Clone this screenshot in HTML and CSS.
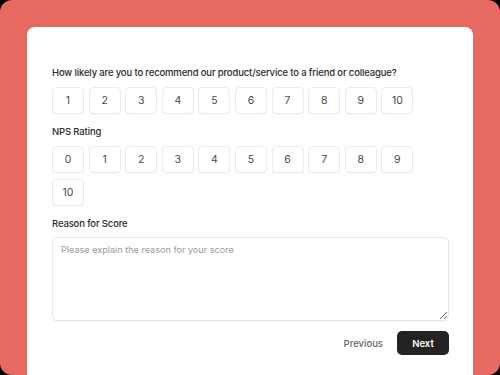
FILE: index.html
```html
<!DOCTYPE html>
<html>
<head>
<meta charset="utf-8">
<link rel="stylesheet" href="styles.css">
</head>
<body>
<div class="frame">
  <div class="card">
    <div class="field">
      <label class="label">How likely are you to recommend our product/service to a friend or colleague?</label>
      <div class="scale">
        <button class="opt">1</button><button class="opt">2</button><button class="opt">3</button><button class="opt">4</button><button class="opt">5</button><button class="opt">6</button><button class="opt">7</button><button class="opt">8</button><button class="opt">9</button><button class="opt">10</button>
      </div>
    </div>
    <div class="field">
      <label class="label">NPS Rating</label>
      <div class="scale">
        <button class="opt">0</button><button class="opt">1</button><button class="opt">2</button><button class="opt">3</button><button class="opt">4</button><button class="opt">5</button><button class="opt">6</button><button class="opt">7</button><button class="opt">8</button><button class="opt">9</button><button class="opt">10</button>
      </div>
    </div>
    <div class="field">
      <label class="label">Reason for Score</label>
      <textarea class="text" placeholder="Please explain the reason for your score"></textarea>
    </div>
    <div class="actions">
      <button class="prev">Previous</button>
      <button class="next">Next</button>
    </div>
  </div>
</div>
</body>
</html>
```
FILE: styles.css
```css
html {
  background: #000;
}
body {
  margin: 0;
  height: 375px;
  overflow: hidden;
  font-family: Inter, "Noto Sans", sans-serif;
}
.frame {
  height: 375px;
  box-sizing: border-box;
  background: #e66a62;
  border-radius: 12px;
  padding: 27px 27px 0 27px;
  overflow: hidden;
}
.card {
  background: #fff;
  border-radius: 8px;
  padding: 39px 24px 40px 25px;
  min-height: 400px;
  box-sizing: border-box;
}
.field {
  margin-bottom: 11px;
}
.label {
  display: block;
  font-size: 9.5px;
  line-height: 14px;
  letter-spacing: -0.15px;
  font-weight: 500;
  color: #2b2b2b;
  margin-bottom: 7px;
}
.scale {
  display: flex;
  flex-wrap: wrap;
  column-gap: 4.6px;
  row-gap: 6px;
  width: 370px;
}
.opt {
  width: 32px;
  height: 27px;
  box-sizing: border-box;
  border: 1px solid #ebebeb;
  border-radius: 4px;
  background: #fff;
  font-family: Inter, "Noto Sans", sans-serif;
  font-size: 10.5px;
  color: #484848;
  padding: 0;
  box-shadow: 0 1px 1px rgba(0,0,0,0.03);
}
.text {
  display: block;
  width: 100%;
  height: 84px;
  box-sizing: border-box;
  border: 1px solid #e8e8e8;
  border-radius: 5px;
  padding: 6px 8px;
  font-family: Inter, "Noto Sans", sans-serif;
  font-size: 9.1px;
  color: #333;
  margin-top: -1px;
  box-shadow: 0 1px 1px rgba(0,0,0,0.04);
}
.text::placeholder {
  color: #9a9a9a;
}
.actions {
  display: flex;
  justify-content: flex-end;
  align-items: center;
  gap: 14px;
  margin-top: -1px;
}
.prev {
  background: none;
  border: none;
  padding: 0;
  font-family: Inter, "Noto Sans", sans-serif;
  font-size: 9.5px;
  font-weight: 500;
  color: #666;
}
.next {
  width: 52px;
  height: 24px;
  border: none;
  border-radius: 5px;
  background: #232323;
  color: #fff;
  font-family: Inter, "Noto Sans", sans-serif;
  font-size: 9.5px;
  font-weight: 600;
  padding: 0;
}
```
